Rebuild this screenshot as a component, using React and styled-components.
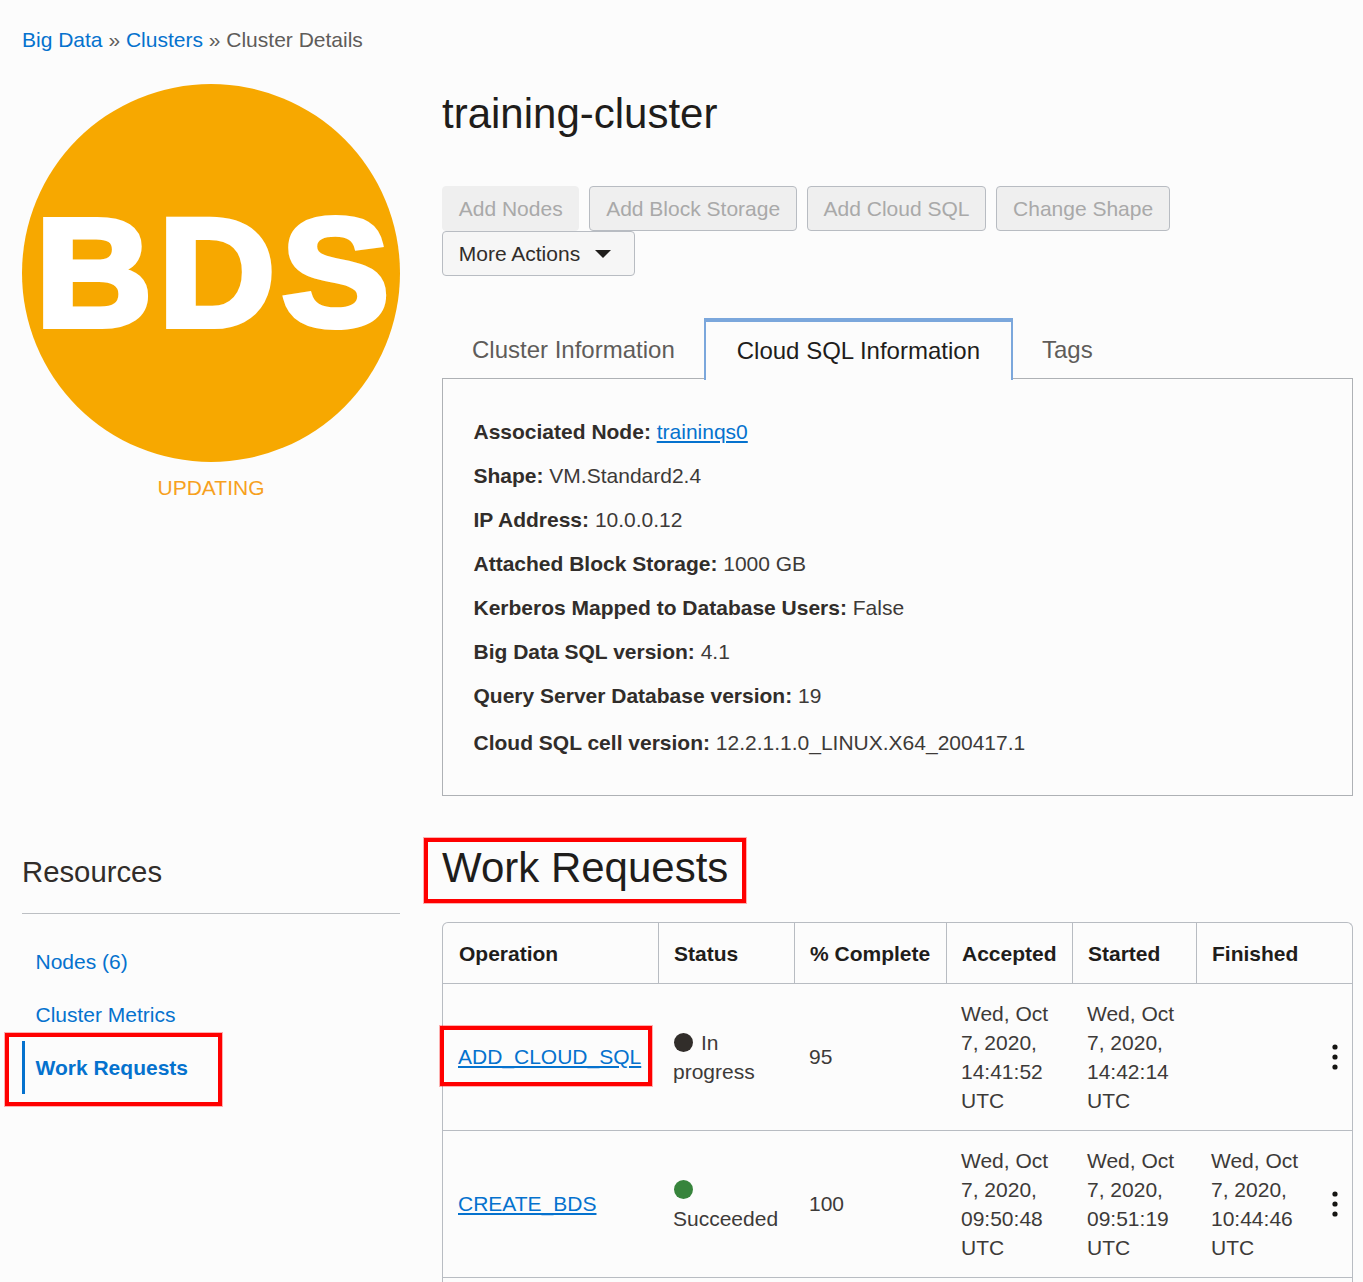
import React from 'react'
import styled, { createGlobalStyle } from 'styled-components'

const GlobalStyle = createGlobalStyle`
  html, body {
    margin: 0;
    padding: 0;
    background: #fcfcfc;
  }
  body {
    font-family: 'Liberation Sans', Arial, sans-serif;
    color: #312d2a;
  }
`

const Page = styled.div`
  height: 1282px;
  overflow: hidden;
  padding: 26px 10px 0 22px;
  box-sizing: border-box;
`

const Crumbs = styled.div`
  font-size: 21px;
  line-height: 28px;
  color: #5f5c5a;
  white-space: pre;
`

const Link = styled.a`
  color: #0572ce;
  text-decoration: ${p => (p.$underline ? 'underline' : 'none')};
  font-weight: ${p => (p.$bold ? 700 : 400)};
`

const TopRow = styled.div`
  display: grid;
  grid-template-columns: 378px 911px;
  column-gap: 42px;
  margin-top: 30px;
`

const Badge = styled.div`
  display: flex;
  flex-direction: column;
  align-items: center;
`

const Circle = styled.div`
  width: 378px;
  height: 378px;
  border-radius: 50%;
  background: #f7a800;
  display: flex;
  align-items: center;
  justify-content: center;
`

const CircleText = styled.span`
  font-size: 154px;
  line-height: 1;
  font-weight: 700;
  color: #fff;
  -webkit-text-stroke: 6px #fff;
  letter-spacing: 6px;
  margin-left: 9px;
  transform: scaleX(1.05);
`

const BadgeLabel = styled.div`
  margin-top: 12px;
  font-size: 21px;
  line-height: 28px;
  color: #f7a11e;
`

const Title = styled.h1`
  margin: 0;
  padding-top: 2px;
  font-size: 42px;
  line-height: 56px;
  font-weight: 400;
  color: #1f1d1b;
`

const Actions = styled.div`
  display: flex;
  flex-wrap: wrap;
  column-gap: 10px;
  margin-top: 44px;
`

const ActionButton = styled.button`
  height: 45px;
  padding: 0 ${p => (p.$enabled ? '22.5px' : '15.75px')} 0 15.75px;
  box-sizing: border-box;
  font-family: inherit;
  font-size: 21px;
  border-radius: 4px;
  display: inline-flex;
  align-items: center;
  gap: 15px;
  border: 1px solid ${p => (p.$plain ? '#efefef' : '#b8bcc2')};
  background: ${p => (p.$enabled ? '#f6f6f6' : '#efefef')};
  color: ${p => (p.$enabled ? '#312d2a' : '#a9a9a9')};
`

const Caret = styled.span`
  width: 0;
  height: 0;
  border-left: 8px solid transparent;
  border-right: 8px solid transparent;
  border-top: 8px solid #1f1d1b;
`

const Tabs = styled.div`
  display: flex;
  margin-top: 42px;
  padding-left: 1px;
  height: 60px;
  position: relative;
  z-index: 1;
`

const Tab = styled.div`
  box-sizing: border-box;
  height: ${p => (p.$active ? '62px' : '60px')};
  padding: ${p => (p.$active ? '0 31px' : '4px 29px 0')};
  font-size: 24px;
  display: flex;
  align-items: center;
  color: ${p => (p.$active ? '#1f1d1b' : '#5f5c5a')};
  background: ${p => (p.$active ? '#fcfcfc' : 'transparent')};
  border: ${p => (p.$active ? '2px solid #7ba7dc' : 'none')};
  border-top-width: ${p => (p.$active ? '4px' : '0')};
  border-bottom: none;
`

const Panel = styled.div`
  box-sizing: border-box;
  height: 418px;
  border: 1px solid #aeb1b5;
  padding: 31px 30px 0 30.5px;
  font-size: 21px;
`

const Info = styled.div`
  height: ${p => (p.$tall ? '47px' : '44px')};
  line-height: 44px;
  margin-top: ${p => (p.$tall ? '3px' : '0')};
  color: #3d3a38;
  white-space: nowrap;

  b {
    color: #312d2a;
  }
`

const BottomRow = styled.div`
  display: grid;
  grid-template-columns: 378px 911px;
  column-gap: 42px;
  margin-top: 42px;
`

const SideTitle = styled.h2`
  margin: 0;
  padding: 14px 0 21px;
  font-size: 29.3px;
  line-height: 40px;
  font-weight: 400;
  color: #312d2a;
  border-bottom: 1px solid #bcbfc3;
`

const SideNav = styled.nav`
  margin-top: 21px;
  display: flex;
  flex-direction: column;
  position: relative;
`

const SideItem = styled.div`
  height: 53px;
  display: flex;
  align-items: center;
  padding-left: ${p => (p.$active ? '10.5px' : '13.5px')};
  font-size: 21px;
  border-left: ${p => (p.$active ? '3px solid #0572ce' : 'none')};
`

const RedBox = styled.div`
  position: relative;
  display: ${p => (p.$block ? 'block' : 'inline-block')};

  &::after {
    content: '';
    position: absolute;
    inset: ${p => p.$inset};
    border: 4px solid #ff0000;
    box-shadow: 0 0 0 1px rgba(255, 0, 0, 0.3);
    pointer-events: none;
  }
`

const Heading = styled.h2`
  margin: 0;
  padding-top: 2px;
  font-size: 42px;
  line-height: 56px;
  font-weight: 400;
  color: #1f1d1b;
`

const Table = styled.div`
  margin-top: 26px;
  border: 1px solid #b8bcc2;
  border-bottom: none;
  border-radius: 6px 6px 0 0;
  font-size: 21px;
`

const Row = styled.div`
  display: grid;
  grid-template-columns: 215px 136px 152px 126px 124px 156px;
  height: ${p => (p.$head ? '60px' : '146px')};
  border-bottom: 1px solid #b8bcc2;
`

const HeadCell = styled.div`
  display: flex;
  align-items: center;
  padding: 2px 0 0 ${p => (p.$first ? '16px' : '15px')};
  font-weight: 700;
  color: #1f1d1b;
  border-left: ${p => (p.$first ? 'none' : '1px solid #b8bcc2')};
  white-space: nowrap;
`

const Cell = styled.div`
  position: relative;
  display: flex;
  align-items: center;
  padding: 0 14px ${p => (p.$single ? '2px' : '0')} 15px;
  line-height: 29px;
  color: #3d3a38;
`

const CellText = styled.div``

const StampText = styled.div`
  max-width: 100px;
`

const Dot = styled.span`
  display: inline-block;
  width: 19px;
  height: 19px;
  border-radius: 50%;
  margin: 0 8px 0 1px;
  vertical-align: -2px;
  background: ${p => p.$color};
`

const Kebab = styled.svg`
  position: absolute;
  right: 14px;
  top: 50%;
  margin-top: -13px;
`

const More = () => (
  <Kebab width="6" height="26" viewBox="0 0 6 26" aria-hidden="true">
    <circle cx="3" cy="3" r="2.6" fill="#161513" />
    <circle cx="3" cy="13" r="2.6" fill="#161513" />
    <circle cx="3" cy="23" r="2.6" fill="#161513" />
  </Kebab>
)

const info = [
  ['Shape:', 'VM.Standard2.4'],
  ['IP Address:', '10.0.0.12'],
  ['Attached Block Storage:', '1000 GB'],
  ['Kerberos Mapped to Database Users:', 'False'],
  ['Big Data SQL version:', '4.1'],
  ['Query Server Database version:', '19'],
]

const Stamp = ({ time }) => (
  <StampText>Wed, Oct 7, 2020, {time} UTC</StampText>
)

const App = () => (
  <Page>
    <GlobalStyle />
    <Crumbs>
      <Link>Big Data</Link> » <Link>Clusters</Link> » Cluster Details
    </Crumbs>

    <TopRow>
      <Badge>
        <Circle>
          <CircleText>BDS</CircleText>
        </Circle>
        <BadgeLabel>UPDATING</BadgeLabel>
      </Badge>
      <div>
        <Title>training-cluster</Title>
        <Actions>
          <ActionButton $plain>Add Nodes</ActionButton>
          <ActionButton>Add Block Storage</ActionButton>
          <ActionButton>Add Cloud SQL</ActionButton>
          <ActionButton>Change Shape</ActionButton>
          <ActionButton $enabled>
            More Actions <Caret />
          </ActionButton>
        </Actions>
        <Tabs>
          <Tab>Cluster Information</Tab>
          <Tab $active>Cloud SQL Information</Tab>
          <Tab>Tags</Tab>
        </Tabs>
        <Panel>
          <Info>
            <b>Associated Node:</b> <Link $underline>traininqs0</Link>
          </Info>
          {info.map(([label, value]) => (
            <Info key={label}>
              <b>{label}</b> {value}
            </Info>
          ))}
          <Info $tall>
            <b>Cloud SQL cell version:</b> 12.2.1.1.0_LINUX.X64_200417.1
          </Info>
        </Panel>
      </div>
    </TopRow>

    <BottomRow>
      <div>
        <SideTitle>Resources</SideTitle>
        <SideNav>
          <SideItem>
            <Link>Nodes (6)</Link>
          </SideItem>
          <SideItem>
            <Link>Cluster Metrics</Link>
          </SideItem>
          <RedBox $block $inset="-8px 178px -12px -17px">
            <SideItem $active>
              <Link $bold>Work Requests</Link>
            </SideItem>
          </RedBox>
        </SideNav>
      </div>
      <div>
        <RedBox $inset="0 -18px -7px -18px">
          <Heading>Work Requests</Heading>
        </RedBox>
        <Table>
          <Row $head>
            <HeadCell $first>Operation</HeadCell>
            <HeadCell>Status</HeadCell>
            <HeadCell>% Complete</HeadCell>
            <HeadCell>Accepted</HeadCell>
            <HeadCell>Started</HeadCell>
            <HeadCell>Finished</HeadCell>
          </Row>
          <Row>
            <Cell $single>
              <RedBox $inset="-16px -11px -15px -18px">
                <Link $underline>ADD_CLOUD_SQL</Link>
              </RedBox>
            </Cell>
            <Cell>
              <CellText>
                <Dot $color="#312d2a" />
                In progress
              </CellText>
            </Cell>
            <Cell $single>95</Cell>
            <Cell>
              <Stamp time="14:41:52" />
            </Cell>
            <Cell>
              <Stamp time="14:42:14" />
            </Cell>
            <Cell>
              <More />
            </Cell>
          </Row>
          <Row>
            <Cell $single>
              <Link $underline>CREATE_BDS</Link>
            </Cell>
            <Cell>
              <CellText>
                <Dot $color="#37843c" />
                Succeeded
              </CellText>
            </Cell>
            <Cell $single>100</Cell>
            <Cell>
              <Stamp time="09:50:48" />
            </Cell>
            <Cell>
              <Stamp time="09:51:19" />
            </Cell>
            <Cell>
              <Stamp time="10:44:46" />
              <More />
            </Cell>
          </Row>
          <Row />
        </Table>
      </div>
    </BottomRow>
  </Page>
)

export default App
